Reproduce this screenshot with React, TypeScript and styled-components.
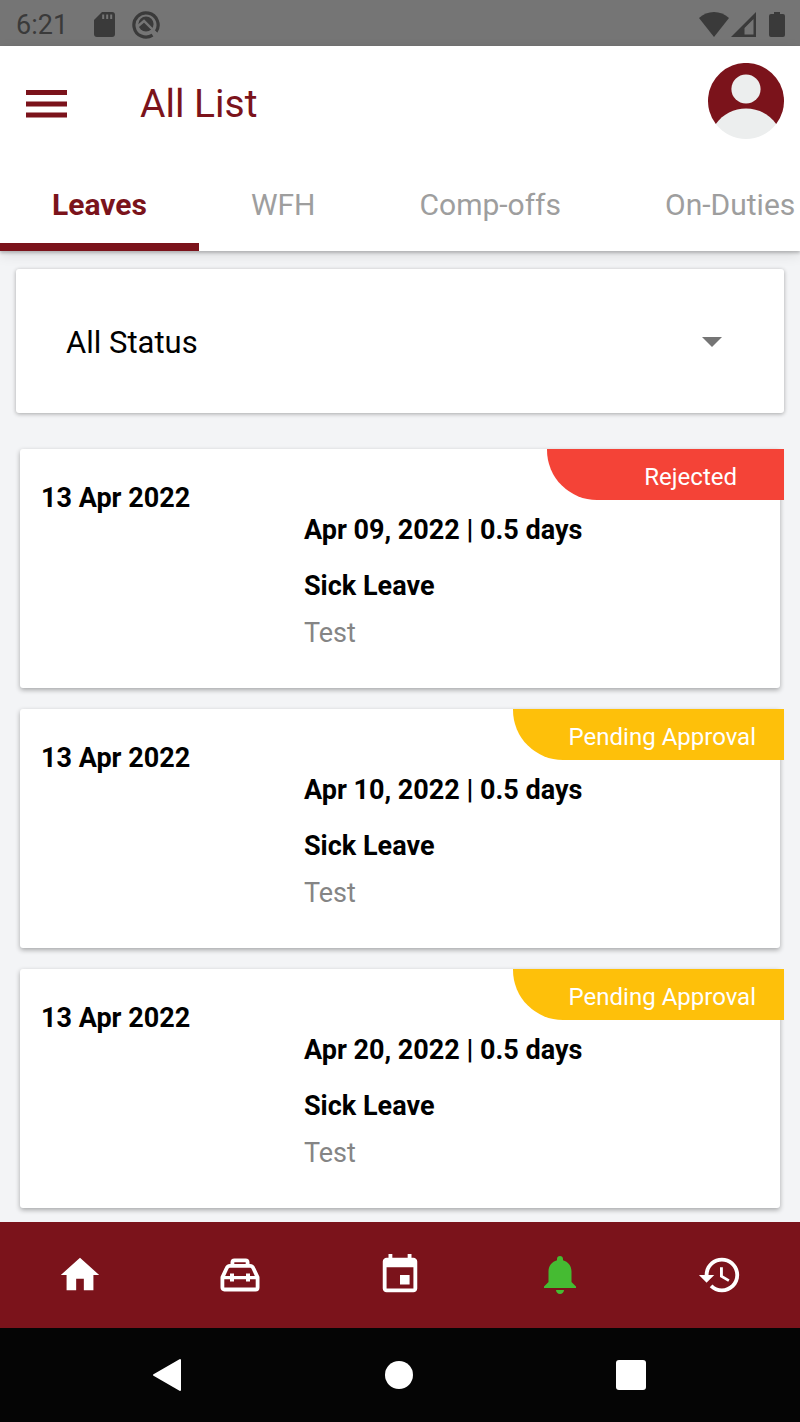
import React from "react";
import styled, { createGlobalStyle } from "styled-components";

const maroon = "#7b131b";

const GlobalStyle = createGlobalStyle`
  * { box-sizing: border-box; }
  body {
    margin: 0;
    background: #f3f4f6;
    font-family: Roboto, "Liberation Sans", sans-serif;
    color: #000;
  }
  button, select { font: inherit; color: inherit; }
  button { border: 0; padding: 0; background: none; cursor: pointer; }
  svg { display: block; }
`;

const Page = styled.div`
  display: flex;
  flex-direction: column;
  min-height: 100vh;
`;

const StatusBar = styled.div`
  display: flex;
  align-items: center;
  justify-content: space-between;
  height: 46px;
  padding: 3px 14px 0 16px;
  background: #757575;
  color: #3a3a3a;
  font-size: 27px;
  line-height: 32px;
`;

const StatusGroup = styled.div`
  display: flex;
  align-items: center;
  gap: 17px;
`;

const Header = styled.header`
  position: relative;
  z-index: 1;
  background: #fff;
  box-shadow: 0 2px 3px rgba(0, 0, 0, 0.22), 0 4px 12px rgba(0, 0, 0, 0.1);
`;

const TitleBar = styled.div`
  display: flex;
  align-items: center;
  height: 113px;
  padding: 2px 16px 0 24px;
`;

const Title = styled.h1`
  flex: 1;
  margin: 0 0 0 73px;
  color: ${maroon};
  font-size: 39px;
  font-weight: 400;
  line-height: 46px;
`;

const Avatar = styled.button`
  margin-bottom: 6px;
`;

const Tabs = styled.div`
  display: flex;
  height: 92px;
  overflow: hidden;
`;

const Tab = styled.button<{ $active?: boolean }>`
  flex: none;
  padding: 8px 52px 0;
  border-bottom: 8px solid ${(p) => (p.$active ? maroon : "transparent")};
  color: ${(p) => (p.$active ? maroon : "#9e9e9e")};
  font-size: 30px;
  font-weight: ${(p) => (p.$active ? 700 : 400)};
  line-height: 34px;
  white-space: nowrap;
`;

const Content = styled.main`
  flex: 1;
  padding: 18px 16px 14px;
`;

const Filter = styled.div`
  display: flex;
  align-items: center;
  height: 144px;
  background: #fff;
  border-radius: 3px;
  box-shadow: 0 1px 4px rgba(0, 0, 0, 0.32);
`;

const FilterSelect = styled.select`
  flex: 1;
  height: 64px;
  margin: 3px 50px 0;
  padding: 0;
  border: 0;
  appearance: none;
  background: none;
  font-size: 31px;
`;

const Caret = styled.svg`
  margin: 1px 62px 0 -50px;
  pointer-events: none;
`;

const List = styled.ul`
  display: flex;
  flex-direction: column;
  gap: 21px;
  margin: 36px 4px 0;
  padding: 0;
  list-style: none;
`;

const Card = styled.li`
  position: relative;
  display: flex;
  padding: 33px 21px 39px;
  background: #fff;
  border-radius: 3px;
  box-shadow: 0 2px 5px rgba(0, 0, 0, 0.32);
  font-size: 27px;
  line-height: 32px;
`;

const Applied = styled.time`
  flex: 0 0 263px;
  font-weight: 700;
`;

const Details = styled.div`
  display: flex;
  flex-direction: column;
  padding-top: 32px;
`;

const Strong = styled.div`
  margin-bottom: 24px;
  font-weight: 700;
`;

const LeaveType = styled(Strong)`
  margin-bottom: 15px;
`;

const Note = styled.div`
  color: #858585;
`;

const Badge = styled.div<{ $pending: boolean }>`
  position: absolute;
  top: 0;
  right: -4px;
  padding: ${(p) => (p.$pending ? "14px 28px 9px 56px" : "14px 47px 9px 97px")};
  border-bottom-left-radius: 50px;
  background: ${(p) => (p.$pending ? "#fec00a" : "#f44337")};
  color: #fff;
  font-size: 24px;
  line-height: 28px;
`;

const BottomNav = styled.nav`
  display: grid;
  grid-template-columns: repeat(5, 1fr);
  height: 106px;
  background: ${maroon};
  color: #fff;
`;

const SystemNav = styled.nav`
  display: grid;
  grid-template-columns: repeat(3, 1fr);
  height: 94px;
  padding: 0 53px 0 51px;
  background: #050505;
  color: #fff;
`;

const NavButton = styled.button<{ $active?: boolean }>`
  display: flex;
  align-items: center;
  justify-content: center;
  color: ${(p) => (p.$active ? "#45bb32" : "inherit")};
`;

const Glyph = ({ d }: { d: string }) => (
  <svg width="46" height="46" viewBox="0 0 24 24" fill="currentColor" aria-hidden="true">
    <path d={d} />
  </svg>
);

const HOME = "M10 20v-6h4v6h5v-8h3L12 3 2 12h3v8z";
const EVENT =
  "M17 12h-5v5h5v-5zM16 1v2H8V1H6v2H5c-1.11 0-1.99.9-1.99 2L3 19c0 1.1.89 2 2 2h14c1.1 0 2-.9 2-2V5c0-1.1-.9-2-2-2h-1V1h-2zm3 18H5V8h14v11z";
const HISTORY =
  "M13 3c-4.97 0-9 4.03-9 9H1l3.89 3.89.07.14L9 12H6c0-3.87 3.13-7 7-7s7 3.13 7 7-3.13 7-7 7c-1.93 0-3.68-.79-4.94-2.06l-1.42 1.42C8.27 19.99 10.51 21 13 21c4.97 0 9-4.03 9-9s-4.03-9-9-9zm-1 5v5l4.28 2.54.72-1.21-3.5-2.08V8H12z";

const ToolboxIcon = () => (
  <svg width="40" height="34" viewBox="0 0 40 34" fill="none" stroke="currentColor" strokeWidth="3.8" strokeLinejoin="round" aria-hidden="true">
    <path d="M12.400 7V4.400Q12.400 2.300 14.400 2.300H25.600Q27.600 2.300 27.600 4.400V7" />
    <path d="M10 7.900H30Q32.500 7.900 33.500 10.500L37.600 19.400V29.500Q37.600 31.500 35.600 31.500H4.400Q2.400 31.500 2.400 29.500V19.400L6.500 10.500Q7.500 7.900 10 7.900Z" />
    <path d="M2.400 19.600H37.600" strokeWidth="3.2" />
    <path d="M12 15.600V23.400M28 15.600V23.400" strokeWidth="4" />
  </svg>
);

const BellIcon = () => (
  <svg width="32" height="38" viewBox="0 0 32 38" fill="currentColor" aria-hidden="true">
    <path d="M16 0C14.200 0 13 1.300 13 3V4.300C8 5.600 4.500 10 4.500 15.500V26L0 30.500V32H32V30.500L27.500 26V15.500C27.500 10 24 5.600 19 4.300V3C19 1.300 17.800 0 16 0Z" />
    <path d="M12 34H20C20 36.300 18.300 38 16 38S12 36.300 12 34Z" />
  </svg>
);

const leaves = [
  { applied: "13 Apr 2022", period: "Apr 09, 2022 | 0.5 days", type: "Sick Leave", note: "Test", status: "Rejected" },
  { applied: "13 Apr 2022", period: "Apr 10, 2022 | 0.5 days", type: "Sick Leave", note: "Test", status: "Pending Approval" },
  { applied: "13 Apr 2022", period: "Apr 20, 2022 | 0.5 days", type: "Sick Leave", note: "Test", status: "Pending Approval" },
];

export default function App() {
  return (
    <Page>
      <GlobalStyle />
      <StatusBar>
        <StatusGroup>
          <span>6:21</span>
          <svg width="30" height="28" viewBox="0 0 30 28" aria-hidden="true">
            <path d="M17 1H27Q30 1 30 4V23Q30 26 27 26H12Q9 26 9 23V9Z" fill="currentColor" />
            <path d="M18.200 3.500V8M22.200 3.500V8M26.200 3.500V8" stroke="#757575" strokeWidth="2" />
          </svg>
          <svg width="28" height="30" viewBox="0 0 28 30" fill="none" aria-hidden="true">
            <path d="M20.500 25.200A12.100 12.100 0 1 1 24 21.800" stroke="currentColor" strokeWidth="3.2" />
            <circle cx="14" cy="14" r="7.6" fill="currentColor" />
            <path d="M5 17L12 11L25 24" stroke="#757575" strokeWidth="2.4" />
          </svg>
        </StatusGroup>
        <svg width="88" height="28" viewBox="0 0 88 28" fill="currentColor" aria-hidden="true">
          <path d="M1 7C9-1 23-1 31 7L16 26Z" />
          <path fillRule="evenodd" d="M33 26L58 1V26ZM46.500 23.500H55.500V8L46.500 17Z" />
          <path d="M76 1H82V3H85Q87 3 87 5V24Q87 26 85 26H73Q71 26 71 24V5Q71 3 73 3H76Z" />
        </svg>
      </StatusBar>

      <Header>
        <TitleBar>
          <button aria-label="Open menu">
            <svg width="43" height="30" viewBox="0 0 43 30" fill={maroon} aria-hidden="true">
              <path d="M2 1H43V6H2ZM2 12.500H43V17.500H2ZM2 23.500H43V28.500H2Z" />
            </svg>
          </button>
          <Title>All List</Title>
          <Avatar aria-label="Profile">
            <svg width="76" height="76" viewBox="0 0 76 76" aria-hidden="true">
              <path d="M7.800 61A38 38 0 1 1 68.200 61Z" fill={maroon} />
              <circle cx="38" cy="26" r="14.600" fill="#eceeee" />
              <path d="M7.800 61C15 51 26 45.500 38 45.500S61 51 68.200 61A38 38 0 0 1 7.800 61Z" fill="#eceeee" />
            </svg>
          </Avatar>
        </TitleBar>
        <Tabs role="tablist">
          <Tab role="tab" aria-selected="true" $active>Leaves</Tab>
          <Tab role="tab" aria-selected="false">WFH</Tab>
          <Tab role="tab" aria-selected="false">Comp-offs</Tab>
          <Tab role="tab" aria-selected="false">On-Duties</Tab>
        </Tabs>
      </Header>

      <Content>
        <Filter>
          <FilterSelect aria-label="Status">
            <option>All Status</option>
          </FilterSelect>
          <Caret width="20" height="10" viewBox="0 0 20 10" fill="#757575" aria-hidden="true">
            <path d="M0 0H20L10 10Z" />
          </Caret>
        </Filter>
        <List>
          {leaves.map((leave) => (
            <Card key={leave.period}>
              <Applied>{leave.applied}</Applied>
              <Details>
                <Strong>{leave.period}</Strong>
                <LeaveType>{leave.type}</LeaveType>
                <Note>{leave.note}</Note>
              </Details>
              <Badge $pending={leave.status !== "Rejected"}>{leave.status}</Badge>
            </Card>
          ))}
        </List>
      </Content>

      <BottomNav aria-label="Main">
        <NavButton aria-label="Home"><Glyph d={HOME} /></NavButton>
        <NavButton aria-label="Tools"><ToolboxIcon /></NavButton>
        <NavButton aria-label="Calendar"><Glyph d={EVENT} /></NavButton>
        <NavButton aria-label="Notifications" $active><BellIcon /></NavButton>
        <NavButton aria-label="History"><Glyph d={HISTORY} /></NavButton>
      </BottomNav>
      <SystemNav aria-label="System">
        <NavButton aria-label="Back">
          <svg width="28" height="34" viewBox="0 0 28 34" fill="currentColor" stroke="currentColor" strokeWidth="2" strokeLinejoin="round" aria-hidden="true">
            <path d="M1 17L27 2V32Z" />
          </svg>
        </NavButton>
        <NavButton aria-label="Home screen">
          <svg width="28" height="28" viewBox="0 0 28 28" fill="currentColor" aria-hidden="true">
            <circle cx="14" cy="14" r="14" />
          </svg>
        </NavButton>
        <NavButton aria-label="Recent apps">
          <svg width="30" height="30" viewBox="0 0 30 30" fill="currentColor" aria-hidden="true">
            <rect width="30" height="30" rx="3" />
          </svg>
        </NavButton>
      </SystemNav>
    </Page>
  );
}
